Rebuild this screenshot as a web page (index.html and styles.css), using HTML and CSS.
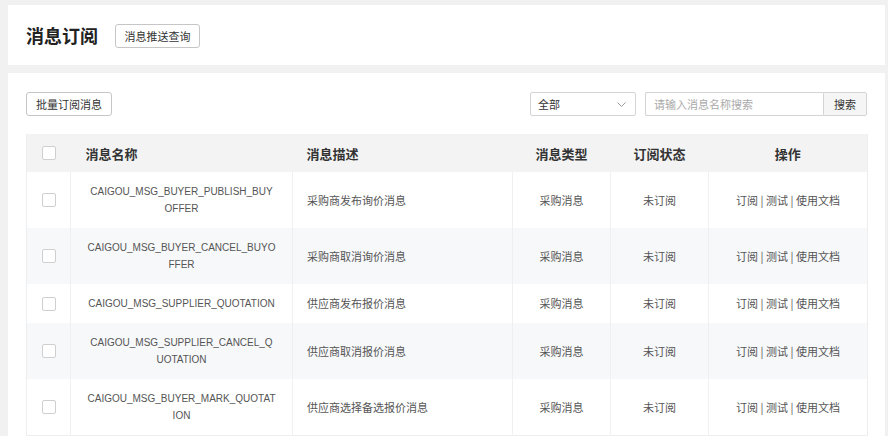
FILE: index.html
```html
<!DOCTYPE html>
<html lang="zh-CN">
<head>
<meta charset="utf-8">
<title>消息订阅</title>
<link rel="stylesheet" href="styles.css">
</head>
<body>
<div class="page">
  <div class="card head-card">
    <h1 class="title">消息订阅</h1>
    <button class="btn">消息推送查询</button>
  </div>
  <div class="card main-card">
    <div class="toolbar">
      <button class="btn">批量订阅消息</button>
      <div class="filters">
        <div class="select">
          <span>全部</span>
          <svg class="chev" width="9" height="5" viewBox="0 0 9 5"><path d="M0.5 0.5 L4.5 4.5 L8.5 0.5" fill="none" stroke="#9a9a9a" stroke-width="1"/></svg>
        </div>
        <div class="search">
          <input class="search-input" type="text" placeholder="请输入消息名称搜索">
          <button class="search-btn">搜索</button>
        </div>
      </div>
    </div>
    <table class="grid">
      <colgroup>
        <col class="c-chk"><col class="c-name"><col class="c-desc"><col class="c-type"><col class="c-status"><col class="c-op">
      </colgroup>
      <thead>
        <tr>
          <th class="chk"><span class="box"></span></th>
          <th class="left">消息名称</th>
          <th class="left">消息描述</th>
          <th>消息类型</th>
          <th>订阅状态</th>
          <th>操作</th>
        </tr>
      </thead>
      <tbody>
        <tr>
          <td class="chk"><span class="box"></span></td>
          <td class="name">CAIGOU_MSG_BUYER_PUBLISH_BUY<wbr>OFFER</td>
          <td class="desc">采购商发布询价消息</td>
          <td>采购消息</td>
          <td>未订阅</td>
          <td>订阅 | 测试 | 使用文档</td>
        </tr>
        <tr class="alt">
          <td class="chk"><span class="box"></span></td>
          <td class="name">CAIGOU_MSG_BUYER_CANCEL_BUYO<wbr>FFER</td>
          <td class="desc">采购商取消询价消息</td>
          <td>采购消息</td>
          <td>未订阅</td>
          <td>订阅 | 测试 | 使用文档</td>
        </tr>
        <tr>
          <td class="chk"><span class="box"></span></td>
          <td class="name">CAIGOU_MSG_SUPPLIER_QUOTATION</td>
          <td class="desc">供应商发布报价消息</td>
          <td>采购消息</td>
          <td>未订阅</td>
          <td>订阅 | 测试 | 使用文档</td>
        </tr>
        <tr class="alt">
          <td class="chk"><span class="box"></span></td>
          <td class="name">CAIGOU_MSG_SUPPLIER_CANCEL_Q<wbr>UOTATION</td>
          <td class="desc">供应商取消报价消息</td>
          <td>采购消息</td>
          <td>未订阅</td>
          <td>订阅 | 测试 | 使用文档</td>
        </tr>
        <tr>
          <td class="chk"><span class="box"></span></td>
          <td class="name">CAIGOU_MSG_BUYER_MARK_QUOTAT<wbr>ION</td>
          <td class="desc">供应商选择备选报价消息</td>
          <td>采购消息</td>
          <td>未订阅</td>
          <td>订阅 | 测试 | 使用文档</td>
        </tr>
      </tbody>
    </table>
  </div>
</div>
</body>
</html>
```

FILE: styles.css
```css
* { box-sizing: border-box; }
html, body {
  margin: 0;
  padding: 0;
  background: #ffffff;
  font-family: "Liberation Sans", "Noto Sans CJK SC", sans-serif;
  color: #555;
}
.page {
  background: #f1f1f1;
  padding: 5px 3px 0 8px;
}
.card {
  background: #fff;
}
.head-card {
  height: 60px;
  display: flex;
  align-items: center;
  padding-left: 18px;
  margin-bottom: 8px;
}
.title {
  margin: 0 17px 0 0;
  font-size: 18px;
  font-weight: bold;
  color: #222;
  font-family: "Noto Sans CJK SC", sans-serif;
  line-height: 24px;
}
.btn {
  height: 24px;
  padding: 0 6px;
  border: 1px solid #c6c6c6;
  border-radius: 3px;
  background: #fff;
  font-family: "Noto Sans CJK SC", sans-serif;
  font-size: 11px;
  color: #333;
  line-height: 22px;
}
.head-card .btn { width: 85px; margin-top: 2px; }
.main-card {
  padding: 19px 18px 0 18px;
}
.toolbar {
  display: flex;
  justify-content: space-between;
  align-items: center;
  margin-bottom: 18px;
}
.toolbar > .btn { width: 86px; }
.filters {
  display: flex;
  align-items: center;
  gap: 9px;
}
.select {
  width: 106px;
  height: 24px;
  border: 1px solid #d4d4d4;
  border-radius: 2px;
  display: flex;
  align-items: center;
  justify-content: space-between;
  padding: 0 9px 0 7px;
  font-family: "Noto Sans CJK SC", sans-serif;
  font-size: 11px;
  color: #333;
}
.chev { display: block; }
.search {
  display: flex;
  height: 24px;
}
.search-input {
  width: 178px;
  height: 24px;
  border: 1px solid #d4d4d4;
  border-right: none;
  border-radius: 2px 0 0 2px;
  padding: 0 8px;
  font-family: "Noto Sans CJK SC", sans-serif;
  font-size: 11px;
  color: #333;
  outline: none;
}
.search-input::placeholder { color: #aaa; }
.search-btn {
  width: 44px;
  height: 24px;
  border: 1px solid #d4d4d4;
  border-radius: 0 2px 2px 0;
  background: #f5f5f5;
  font-family: "Noto Sans CJK SC", sans-serif;
  font-size: 11px;
  color: #333;
  padding: 0;
}
.grid {
  width: 841px;
  table-layout: fixed;
  border-collapse: collapse;
  border-left: 1px solid #eeeeee;
  border-right: 1px solid #eeeeee;
  border-bottom: 1px solid #eeeeee;
}
.c-chk { width: 44px; }
.c-name { width: 222px; }
.c-desc { width: 220px; }
.c-type { width: 98px; }
.c-status { width: 98px; }
.c-op { width: 159px; }
.grid th {
  height: 38px;
  background: #f3f3f3;
  font-family: "Noto Sans CJK SC", sans-serif;
  font-size: 13px;
  font-weight: bold;
  color: #333;
  text-align: center;
  padding: 0;
}
.grid th.left { text-align: left; padding-left: 15px; }
.grid th:nth-child(3) { padding-left: 14px; }
.grid td {
  font-family: "Noto Sans CJK SC", sans-serif;
  font-size: 11px;
  color: #555;
  text-align: center;
  line-height: 17px;
  padding: 11px 4px;
  border-right: 1px solid #f0f0f0;
}
.grid td:last-child { border-right: none; }
.grid tr.alt td { background: #f7f8fa; }
.grid td.name {
  font-family: "Liberation Sans", "Noto Sans CJK SC", sans-serif;
  font-size: 10px;
  padding: 11px 15px;
}
.grid td.desc {
  text-align: left;
  padding-left: 14px;
}
.chk .box {
  display: inline-block;
  width: 14px;
  height: 14px;
  border: 1px solid #cfcfcf;
  border-radius: 2px;
  background: #fff;
  vertical-align: middle;
}
.grid th.chk, .grid td.chk { padding: 0; line-height: 0; }
.grid td.chk { padding-left: 0; }
```
